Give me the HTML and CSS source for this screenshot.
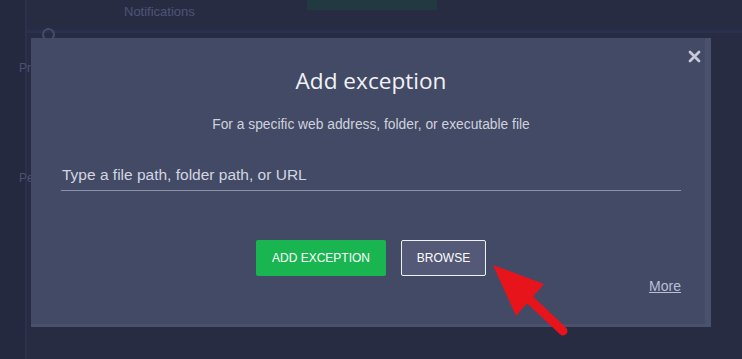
FILE: index.html
```html
<!DOCTYPE html>
<html>
<head>
<meta charset="utf-8">
<link rel="stylesheet" href="styles.css">
</head>
<body>
<div class="app">
  <aside class="sidebar">
    <span class="side-item side-pr">Pr</span>
    <span class="side-item side-pe">Pe</span>
  </aside>
  <main class="content">
    <div class="topbar">
      <span class="tab">Notifications</span>
      <span class="green-tab"></span>
    </div>
  </main>
  <span class="ring"></span>

  <div class="modal">
    <button class="close" aria-label="Close">
      <svg width="13" height="13" viewBox="0 0 13 13"><path d="M2 2 L11 11 M11 2 L2 11" stroke="#c5c9d8" stroke-width="2.8" stroke-linecap="round"/></svg>
    </button>
    <h1 class="title">Add exception</h1>
    <p class="subtitle">For a specific web address, folder, or executable file</p>
    <div class="field">
      <span class="placeholder">Type a file path, folder path, or URL</span>
    </div>
    <div class="actions">
      <button class="btn btn-primary">ADD EXCEPTION</button>
      <button class="btn btn-outline">BROWSE</button>
    </div>
    <div class="more-row"><a class="more" href="#">More</a></div>
  </div>

  <svg class="arrow" width="90" height="80" viewBox="0 0 90 80">
    <path d="M38 37 L73 70" stroke="#e8141c" stroke-width="9" stroke-linecap="round" fill="none"/>
    <polygon points="3,4 54,23 26,55" fill="#e8141c"/>
  </svg>
</div>
</body>
</html>
```

FILE: styles.css
```css
* { box-sizing: border-box; }
html, body { margin: 0; padding: 0; }
body {
  width: 742px;
  height: 359px;
  overflow: hidden;
  background: #262a3f;
  font-family: "Liberation Sans", Arial, sans-serif;
}
.app {
  position: relative;
  display: flex;
  width: 742px;
  height: 359px;
}
.sidebar {
  width: 27px;
  flex: none;
  background: #252940;
  border-right: 2px solid #2c3149;
  position: relative;
}
.side-item {
  position: absolute;
  left: 19px;
  font-size: 12px;
  color: #4c5270;
}
.side-pr { top: 61px; }
.side-pe { top: 171px; }
.content {
  flex: 1;
  background: #282c43;
}
.topbar {
  display: flex;
  align-items: flex-start;
  height: 33px;
  border-bottom: 3px solid #2a3150;
}
.tab {
  margin-left: 97px;
  margin-top: 4px;
  font-size: 13px;
  color: #4e5575;
}
.green-tab {
  margin-left: 112px;
  width: 130px;
  height: 10px;
  background: #213a41;
}
.ring {
  position: absolute;
  left: 42px;
  top: 28px;
  width: 13px;
  height: 13px;
  border: 2px solid #454b69;
  border-radius: 50%;
}
.modal {
  position: absolute;
  left: 31px;
  top: 38px;
  width: 680px;
  height: 289px;
  background: #434a65;
  border-right: 6px solid #4a516c;
  border-bottom: 3px solid #4a516c;
  display: flex;
  flex-direction: column;
  align-items: center;
  padding: 28px 24px 0 30px;
}
.close {
  position: absolute;
  top: 12px;
  left: 657px;
  background: none;
  border: none;
  padding: 0;
  width: 13px;
  height: 13px;
  display: flex;
  cursor: pointer;
}
.title {
  margin: 0;
  font-family: "Open Sans", sans-serif;
  font-weight: 400;
  font-size: 22.6px;
  line-height: 30px;
  color: #f1f2f6;
}
.subtitle {
  margin: 21px 0 0 0;
  font-size: 13.8px;
  line-height: 16px;
  color: #cfd2dd;
}
.field {
  align-self: stretch;
  margin-top: 26px;
  height: 32px;
  padding-left: 1px;
  border-bottom: 1px solid #8c92aa;
  display: flex;
  align-items: center;
}
.placeholder {
  font-size: 15.5px;
  color: #d3d6e1;
}
.actions {
  margin-top: 49px;
  display: flex;
  gap: 15px;
}
.btn {
  height: 36px;
  font-family: "Liberation Sans", Arial, sans-serif;
  font-size: 12px;
  color: #fff;
  border-radius: 2px;
  cursor: pointer;
}
.btn-primary {
  width: 130px;
  background: #19b550;
  border: none;
}
.btn-outline {
  width: 85px;
  background: #535976;
  border: 1px solid #f0f1f5;
}
.more-row {
  align-self: stretch;
  display: flex;
  justify-content: flex-end;
  margin-top: 2px;
}
.more {
  font-size: 14px;
  color: #b9bfd6;
  text-decoration: underline;
}
.arrow {
  position: absolute;
  left: 490px;
  top: 261px;
}
```
